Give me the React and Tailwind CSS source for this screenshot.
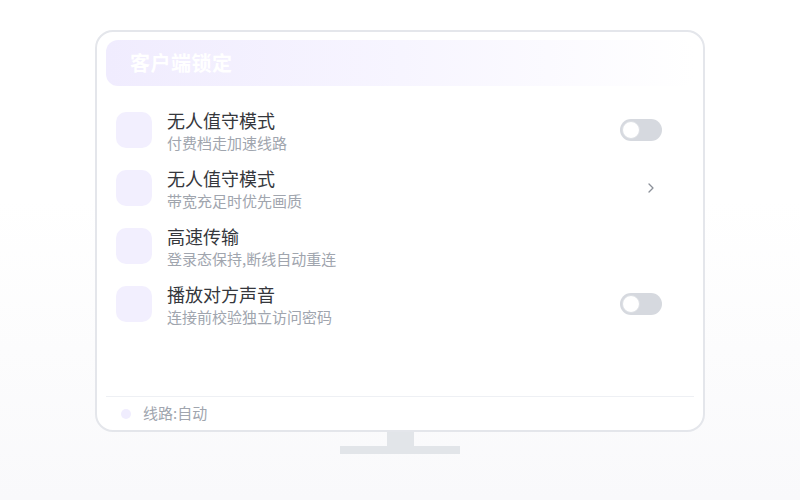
import { useState } from 'react'

const rows = [
  { title: '无人值守模式', sub: '付费档走加速线路', right: 'toggle' },
  { title: '无人值守模式', sub: '带宽充足时优先画质', right: 'chevron' },
  { title: '高速传输', sub: '登录态保持,断线自动重连', right: null },
  { title: '播放对方声音', sub: '连接前校验独立访问密码', right: 'toggle' },
]

function Toggle({ on, onChange }) {
  return (
    <button
      onClick={onChange}
      className={`w-[42px] h-[22px] rounded-full p-[2px] flex items-center ${on ? 'bg-[#a78bfa] justify-end' : 'bg-[#d6d9df] justify-start'}`}
    >
      <span className="w-[18px] h-[18px] rounded-full bg-white border border-[#dcdfe4]" />
    </button>
  )
}

function Row({ item, on, onToggle }) {
  return (
    <div className="h-[58px] flex items-center pl-[10px] pr-[32px]">
      <div className="w-9 h-9 rounded-[10px] bg-[#f2effe] shrink-0" />
      <div className="ml-[15px] pt-[2px] flex-1 flex flex-col">
        <span className="text-[18px] leading-[24px] text-[#35373c]">{item.title}</span>
        <span className="text-[15px] leading-[22px] text-[#a0a5ae]">{item.sub}</span>
      </div>
      {item.right === 'toggle' && <Toggle on={on} onChange={onToggle} />}
      {item.right === 'chevron' && (
        <svg width="8" height="12" viewBox="0 0 8 12" className="mr-[7px]">
          <path d="M2 2l4 4-4 4" fill="none" stroke="#8b9099" strokeWidth="1.3" strokeLinecap="round" strokeLinejoin="round" />
        </svg>
      )}
    </div>
  )
}

export default function App() {
  const [toggles, setToggles] = useState({ 0: false, 3: false })

  return (
    <div
      className="w-[800px] h-[500px] bg-linear-to-b from-white from-40% to-[#f9f9fb] flex flex-col items-center pt-[30px]"
      style={{ fontFamily: '"Noto Sans CJK SC", "Noto Sans", sans-serif' }}
    >
      <div className="w-[610px] h-[402px] border-2 border-[#e4e6eb] rounded-[18px] bg-white pt-[8px] px-[9px] flex flex-col">
        <div className="h-[46px] rounded-[12px] bg-linear-to-r from-[#f0ecfe] via-[#f7f5ff] to-white/0 flex items-center px-[24px]">
          <span className="text-[20px] font-bold text-white tracking-[0.5px]">客户端锁定</span>
        </div>

        <div className="mt-[15px] flex flex-col">
          {rows.map((item, i) => (
            <Row
              key={i}
              item={item}
              on={toggles[i]}
              onToggle={() => setToggles({ ...toggles, [i]: !toggles[i] })}
            />
          ))}
        </div>

        <div className="flex-1" />

        <div className="h-[34px] border-t border-[#eef0f4] flex items-center pl-[15px]">
          <span className="w-[10px] h-[10px] rounded-full bg-[#f0edfe]" />
          <span className="ml-[12px] text-[15px] text-[#a0a5ae]">线路:自动</span>
        </div>
      </div>
      <div className="w-[27px] h-[14px] bg-[#e2e5e9]" />
      <div className="w-[120px] h-[8px] bg-[#e2e5e9]" />
    </div>
  )
}
